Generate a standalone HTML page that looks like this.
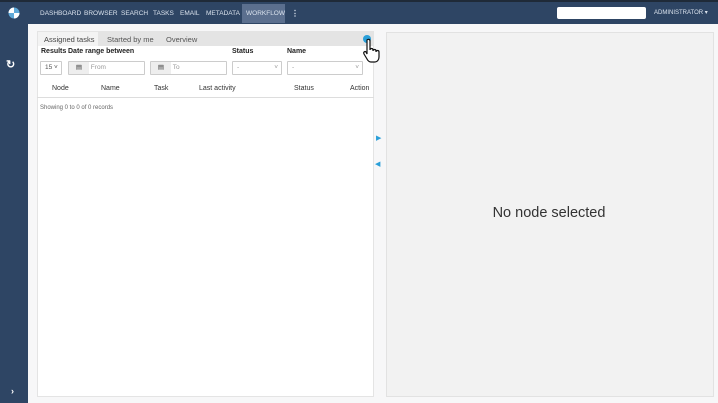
<!DOCTYPE html><html><head><style>
*{box-sizing:border-box;margin:0;padding:0}
body{width:718px;height:403px;overflow:hidden;background:#f7f7f8;font-family:"Liberation Sans",sans-serif;position:relative}
.top{position:absolute;left:0;top:0;width:718px;height:24px;background:#2e4564;border-top:2px solid #1f2a38}
.side{position:absolute;left:0;top:24px;width:28px;height:379px;background:#2e4564}
.nav{position:absolute;top:4px;height:19px;font-size:6.5px;color:#dbe3ee;line-height:19px}
.a{position:absolute;font-size:7px}
.panel{position:absolute;left:37px;top:31px;width:337px;height:366px;background:#fff;border:1px solid #e4e4e4}
.rp{position:absolute;left:386px;top:32px;width:328px;height:365px;background:#f2f2f2;border:1px solid #e2e2e2}
.inp{position:absolute;height:14px;border:1px solid #ccc;background:#fff;font-size:6.5px;color:#999;line-height:12px;padding-left:4px;border-radius:1px}
.b{font-weight:bold;color:#222}
.th{position:absolute;top:85px;font-size:7px;color:#333}
</style></head><body>
<div class="top"></div>
<div class="side"></div>
<svg style="position:absolute;left:8px;top:7px" width="12" height="12" viewBox="0 0 12 12"><circle cx="6" cy="6" r="5.5" fill="#5fa9d8"/><path d="M6 0.5V6H0.5A5.5 5.5 0 0 1 6 .5Z" fill="#fff"/><path d="M6 6h5.5A5.5 5.5 0 0 1 6 11.5Z" fill="#fff"/></svg>
<div style="position:absolute;left:242px;top:4px;width:43px;height:19px;background:#5b6f8e"></div>
<div class="nav" style="left:40px">DASHBOARD</div>
<div class="nav" style="left:84px">BROWSER</div>
<div class="nav" style="left:121px">SEARCH</div>
<div class="nav" style="left:153px">TASKS</div>
<div class="nav" style="left:180px">EMAIL</div>
<div class="nav" style="left:206px">METADATA</div>
<div class="nav" style="left:246px">WORKFLOW</div>
<div class="nav" style="left:291px;font-weight:bold;font-size:8px">⋮</div>
<div style="position:absolute;left:557px;top:7px;width:89px;height:12px;background:#fff;border-radius:2px"></div>
<div class="nav" style="left:654px;font-size:6px">ADMINISTRATOR ▾</div>
<div style="position:absolute;left:6px;top:58px;color:#fff;font-size:11px;font-weight:bold">↻</div>
<div style="position:absolute;left:11px;top:386px;color:#fff;font-size:9px;font-weight:bold">›</div>
<div class="panel"></div>
<div style="position:absolute;left:37px;top:32px;width:337px;height:14px;background:#e4e4e4"></div>
<div style="position:absolute;left:38px;top:32px;width:60px;height:14px;background:#f3f3f3"></div>
<div class="a" style="left:44px;top:35px;color:#444;font-size:7.5px">Assigned tasks</div>
<div class="a" style="left:107px;top:35px;color:#555;font-size:7.5px">Started by me</div>
<div class="a" style="left:166px;top:35px;color:#555;font-size:7.5px">Overview</div>
<div style="position:absolute;left:363px;top:35px;width:8px;height:8px;border-radius:50%;background:#2a9fd8"></div>
<div class="a b" style="left:41px;top:48px">Results</div>
<div class="a b" style="left:68px;top:48px">Date range between</div>
<div class="a b" style="left:232px;top:48px">Status</div>
<div class="a b" style="left:287px;top:48px">Name</div>
<div class="inp" style="left:40px;top:61px;width:22px;color:#555">15 ˅</div>
<div class="inp" style="left:68px;top:61px;width:77px;background:#fff;padding-left:0"><span style="display:inline-block;width:20px;height:12px;background:#eee;text-align:center;color:#333">▤</span> From</div>
<div class="inp" style="left:150px;top:61px;width:77px;padding-left:0"><span style="display:inline-block;width:20px;height:12px;background:#eee;text-align:center;color:#333">▤</span> To</div>
<div class="inp" style="left:232px;top:61px;width:50px">-<span style="float:right;padding-right:3px">˅</span></div>
<div class="inp" style="left:287px;top:61px;width:76px">-<span style="float:right;padding-right:3px">˅</span></div>
<div style="position:absolute;left:37px;top:78px;width:337px;height:20px;border-bottom:1px solid #ddd"></div>
<div class="th" style="left:52px">Node</div>
<div class="th" style="left:101px">Name</div>
<div class="th" style="left:154px">Task</div>
<div class="th" style="left:199px">Last activity</div>
<div class="th" style="left:294px">Status</div>
<div class="th" style="left:350px">Action</div>
<div class="a" style="left:40px;top:105px;font-size:6px;color:#666">Showing 0 to 0 of 0 records</div>
<div class="a" style="left:376px;top:134px;color:#2a9fd8;font-size:7px">▶</div>
<div class="a" style="left:375px;top:160px;color:#2a9fd8;font-size:7px">◀</div>
<div class="rp"></div>
<div class="a" style="left:386px;top:205px;width:326px;text-align:center;font-size:14.5px;color:#333">No node selected</div>
<svg style="position:absolute;left:362px;top:38px" width="22" height="26" viewBox="0 0 22 26"><path d="M5 2c1-1 3-1 3 1v9c0-2 3-2 3 0v1c0-2 3-2 3 0v1c0-2 3-2 3 0v5c0 3-2 5-4 5H9c-2 0-3-1-4-3L2 16c-1-2 1-3 2-2l1 2Z" fill="#fff" stroke="#111" stroke-width="1.2"/></svg>
</body></html>
